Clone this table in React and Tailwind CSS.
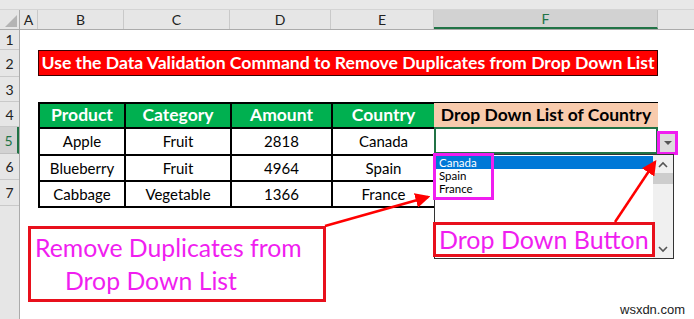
const cols = [
  { l: 'A', w: 'w-[18px]' },
  { l: 'B', w: 'w-[86px]' },
  { l: 'C', w: 'w-[106px]' },
  { l: 'D', w: 'w-[101px]' },
  { l: 'E', w: 'w-[103px]' },
  { l: 'F', w: 'w-[224px]', sel: true },
]

const rowHeads = [
  { n: 1, h: 'h-[20px]' },
  { n: 2, h: 'h-[27px]' },
  { n: 3, h: 'h-[25px]' },
  { n: 4, h: 'h-[25px]' },
  { n: 5, h: 'h-[27px]', sel: true },
  { n: 6, h: 'h-[26px]' },
  { n: 7, h: 'h-[26px]' },
]

const data = [
  ['Apple', 'Fruit', '2818', 'Canada'],
  ['Blueberry', 'Fruit', '4964', 'Spain'],
  ['Cabbage', 'Vegetable', '1366', 'France'],
]

const heads = ['Product', 'Category', 'Amount', 'Country']

function App() {
  return (
    <div className="relative w-[694px] h-[319px] overflow-hidden bg-white font-['Lato',sans-serif] text-black">
      {/* strip above the column letters */}
      <div className="h-[10px] bg-[#e8e8e8] border-b border-[#d4d4d4]" />

      {/* column letters */}
      <div className="flex h-[20px] bg-[#e6e6e6] border-b border-[#ababab] text-[14px] text-[#222]">
        <div className="w-[20px] relative border-r border-[#ababab]">
          <div className="absolute right-[2px] bottom-[2px] w-0 h-0 border-l-[12px] border-l-transparent border-b-[12px] border-b-[#b4b4b4]" />
        </div>
        {cols.map((c) => (
          <div
            key={c.l}
            className={
              c.sel
                ? `${c.w} flex items-center justify-center bg-[#d2d2d2] border-r border-[#c0c0c0] border-b-2 border-b-[#217346] text-[#217346]`
                : `${c.w} flex items-center justify-center border-r border-[#c9c9c9]`
            }
          >
            {c.l}
          </div>
        ))}
        <div className="flex-1" />
      </div>

      <div className="flex">
        {/* row numbers */}
        <div className="w-[20px] h-[289px] bg-[#e6e6e6] border-r border-[#ababab] text-[14px] text-[#222]">
          {rowHeads.map((r) => (
            <div
              key={r.n}
              className={
                r.sel
                  ? `${r.h} flex items-center justify-center bg-[#d2d2d2] border-b border-[#c0c0c0] border-r-2 border-r-[#217346] text-[#217346]`
                  : `${r.h} flex items-center justify-center border-b border-[#c9c9c9]`
              }
            >
              {r.n}
            </div>
          ))}
        </div>

        {/* sheet */}
        <div className="flex-1">
          <div className="h-[20px]" />
          <div className="h-[27px] flex">
            <div className="w-[18px]" />
            <div className="w-[620px] h-[26px] bg-[#ff0000] border border-[#3a0000] flex items-center justify-center text-white font-bold text-[17.6px] whitespace-nowrap">
              Use the Data Validation Command to Remove Duplicates from Drop Down List
            </div>
          </div>
          <div className="h-[25px]" />

          <div className="flex">
            <div className="w-[18px]" />
            <div className="w-[396px] grid grid-cols-[86px_106px_101px_103px] grid-rows-[25px_27px_26px_26px] border-l-2 border-t-2 border-black text-[15px]">
              {heads.map((h) => (
                <div key={h} className="bg-[#00b050] border-r-2 border-b-2 border-black flex items-center justify-center text-white font-bold text-[17.5px]">
                  {h}
                </div>
              ))}
              {data.map((row) =>
                row.map((v, i) => (
                  <div key={row[0] + i} className="border-r-2 border-b-2 border-black flex items-center justify-center">
                    {v}
                  </div>
                ))
              )}
            </div>
            <div className="w-[224px]">
              <div className="h-[25px] bg-[#f8cbad] border-t border-black flex items-center justify-center font-bold text-[17.5px]">
                Drop Down List of Country
              </div>
              <div className="h-[27px] border-2 border-[#217346]" />
            </div>
          </div>
        </div>
      </div>

      {/* drop down button */}
      <div className="absolute left-[657px] top-[131px] w-[21px] h-[24px] border-[3px] border-[#f01ef0] flex items-center justify-center bg-white">
        <div className="w-[15px] h-[18px] bg-[#dcdcdc] flex items-center justify-center">
          <div className="w-0 h-0 border-l-[4px] border-r-[4px] border-t-[4px] border-l-transparent border-r-transparent border-t-[#555]" />
        </div>
      </div>

      {/* open list */}
      <div className="absolute left-[434px] top-[154px] w-[240px] h-[105px] bg-white border border-[#333] flex">
        <div className="flex-1 pt-[1px] text-[11.5px] leading-[13px]">
          <div className="bg-[#0078d7] text-white pl-[4px] h-[13px]">Canada</div>
          <div className="pl-[4px] h-[13px]">Spain</div>
          <div className="pl-[4px] h-[13px]">France</div>
        </div>
        <div className="w-[20px] bg-[#f0f0f0] flex flex-col items-center">
          <svg width="12" height="12" viewBox="0 0 12 12" className="mt-[4px]">
            <path d="M2 8 L6 4 L10 8" fill="none" stroke="#555" strokeWidth="1.6" />
          </svg>
          <div className="w-full h-[11px] bg-[#cdcdcd] mt-[2px]" />
          <div className="flex-1" />
          <svg width="12" height="12" viewBox="0 0 12 12" className="mb-[3px]">
            <path d="M2 4 L6 8 L10 4" fill="none" stroke="#555" strokeWidth="1.6" />
          </svg>
        </div>
      </div>

      {/* highlight around items */}
      <div className="absolute left-[433px] top-[153px] w-[61px] h-[47px] border-[3px] border-[#f01ef0]" />

      {/* callouts */}
      <div className="absolute left-[28px] top-[226px] w-[298px] h-[76px] border-[3px] border-[#e8101c] bg-white text-[#f01ef0] text-[24.8px] leading-[33px] pt-[2px]">
        <div className="pl-[4px]">Remove Duplicates from</div>
        <div className="pl-[34px]">Drop Down List</div>
      </div>
      <div className="absolute left-[433px] top-[222px] w-[222px] h-[35px] border-[3px] border-[#e8101c] bg-white text-[#f01ef0] text-[25px] leading-[28px] pl-[3px]">
        Drop Down Button
      </div>

      {/* arrows */}
      <svg className="absolute inset-0 pointer-events-none" width="694" height="319">
        <defs>
          <marker id="ah" markerWidth="6" markerHeight="6" refX="5" refY="3" orient="auto" markerUnits="strokeWidth">
            <path d="M0 0 L6 3 L0 6 Z" fill="#ff0000" />
          </marker>
        </defs>
        <line x1="325" y1="226" x2="428" y2="197" stroke="#ff0000" strokeWidth="2.5" markerEnd="url(#ah)" />
        <line x1="615" y1="222" x2="655" y2="162" stroke="#ff0000" strokeWidth="2.5" markerEnd="url(#ah)" />
      </svg>

      <div className="absolute left-[620px] top-[300px] text-[13px] text-[#222] font-['Liberation_Sans',sans-serif]">wsxdn.com</div>
    </div>
  )
}

export default App
